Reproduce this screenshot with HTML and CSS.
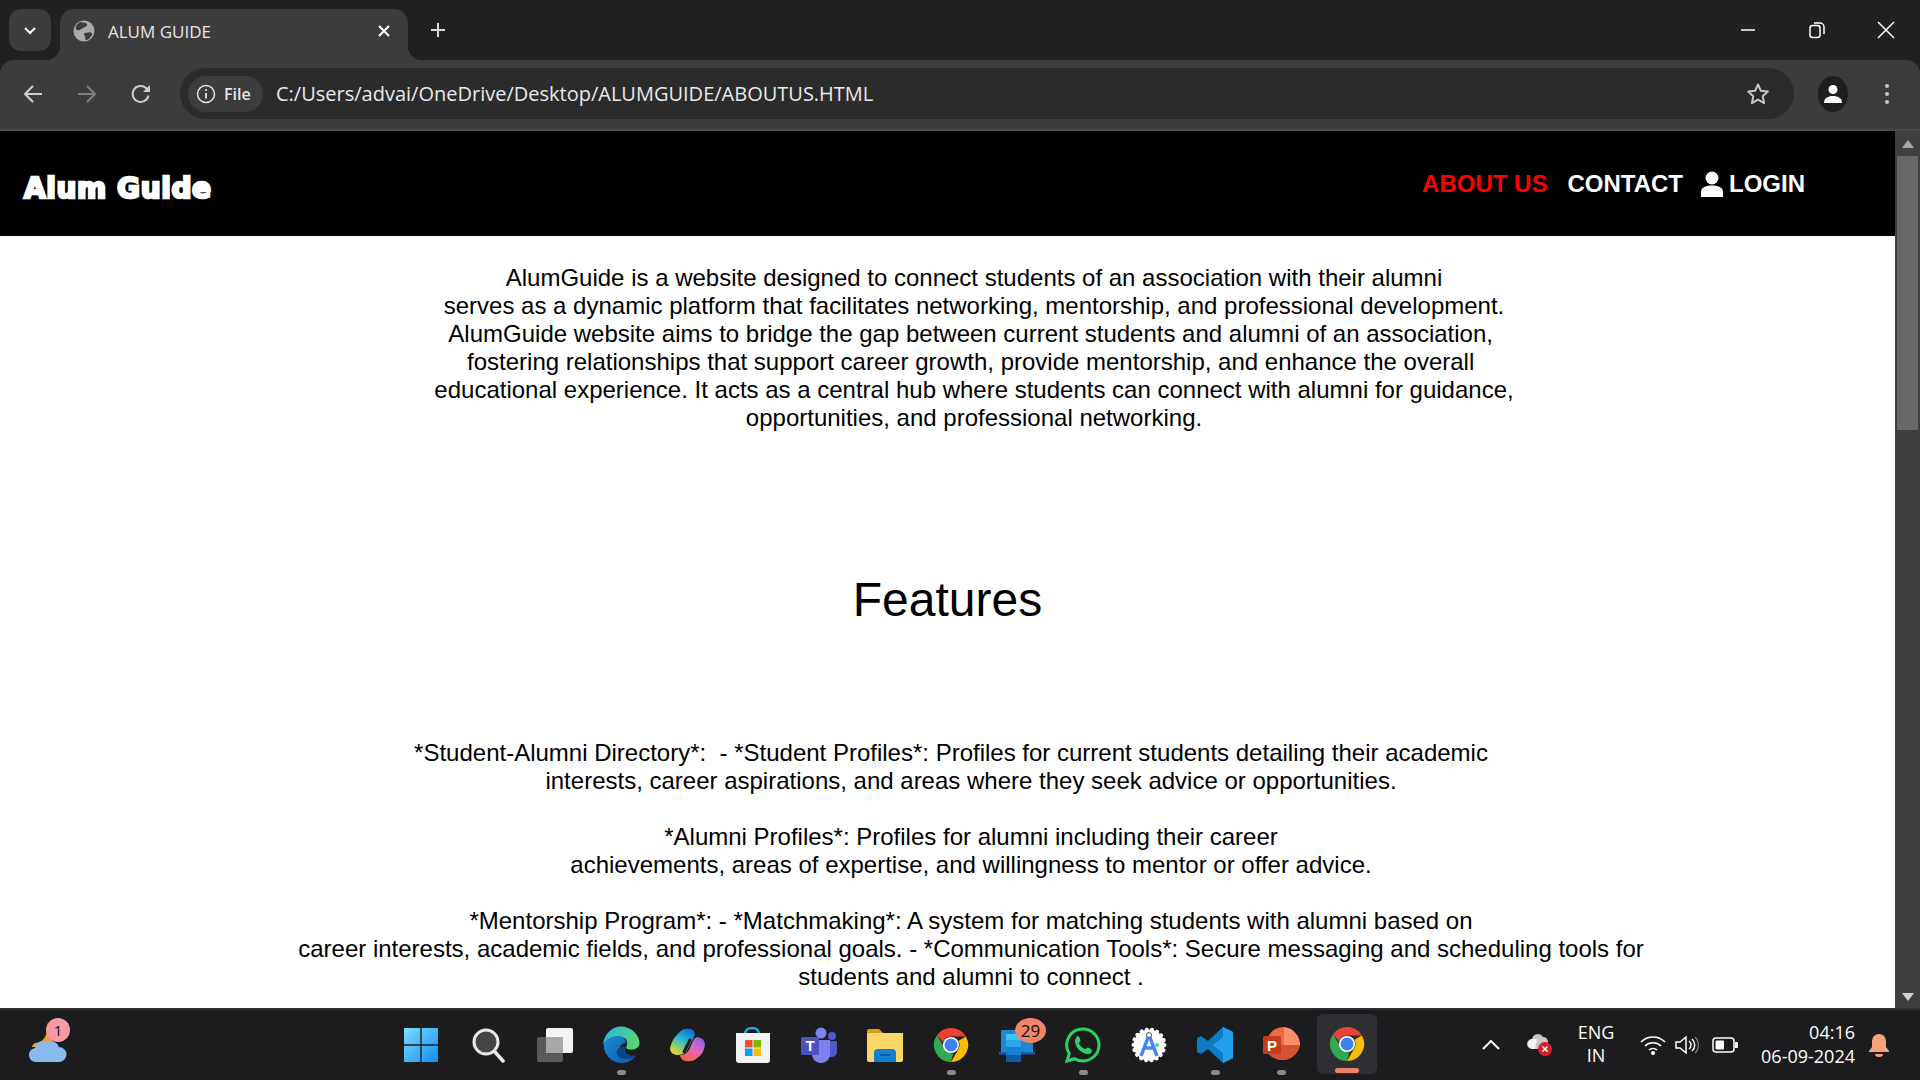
FILE: index.html
```html
<!DOCTYPE html>
<html lang="en">
<head>
    <meta charset="UTF-8">
    <title>ALUM GUIDE</title>
    <link rel="stylesheet" href="styles.css">
</head>
<body>
    <svg class="defs" width="0" height="0">
        <defs>
            <symbol id="chrome" viewBox="0 0 40 40">
                <path fill="#ea4335" d="M20 1a19 19 0 0 1 16.5 9.5H20a9.5 9.5 0 0 0-9 6.5L4.600 9A19 19 0 0 1 20 1z"/>
                <path fill="#fbbc04" d="M36.500 10.500A19 19 0 0 1 20 39l8.200-14.200A9.500 9.500 0 0 0 28.200 15.200z"/>
                <path fill="#34a853" d="M20 39A19 19 0 0 1 4.600 9l8 14a9.500 9.500 0 0 0 10 6.300z"/>
                <circle cx="20" cy="20" r="9" fill="#fff"/>
                <circle cx="20" cy="20" r="7.200" fill="#3f82ef"/>
            </symbol>
        </defs>
    </svg>

    <!-- barra de abas -->
    <div class="tabstrip">
        <div class="tab-search">
            <svg width="14" height="14" viewBox="0 0 14 14"><path d="M2 5l5 5 5-5" fill="none" stroke="#fff" stroke-width="2"/></svg>
        </div>
        <div class="tab">
            <svg class="favicon" width="22" height="22" viewBox="0 0 22 22">
                <circle cx="11" cy="11" r="10.500" fill="#a9adb1"/>
                <path d="M7 2c3 1 6 0 7 2s-2 3-4 4-4 3-6 2-2-5 3-8zM12 13c3-1 6-1 7 0s-2 6-5 7-1-3-2-4-2-2 0-3z" fill="#3c3c3c"/>
            </svg>
            <span class="tab-title">ALUM GUIDE</span>
            <svg class="tab-close" width="14" height="14" viewBox="0 0 14 14"><path d="M2 2l10 10M12 2L2 12" stroke="#fff" stroke-width="2"/></svg>
        </div>
        <svg class="new-tab" width="18" height="18" viewBox="0 0 18 18"><path d="M9 2v14M2 9h14" stroke="#d8d8d8" stroke-width="2"/></svg>
        <div class="window-controls">
            <svg width="18" height="18" viewBox="0 0 18 18"><path d="M2 9h14" stroke="#fff" stroke-width="1.500"/></svg>
            <svg width="18" height="18" viewBox="0 0 18 18"><rect x="2" y="4.500" width="10" height="12" rx="2.500" fill="none" stroke="#fff" stroke-width="1.500"/><path d="M6 2h6a4 4 0 0 1 4 4v7" fill="none" stroke="#fff" stroke-width="1.500"/></svg>
            <svg width="18" height="18" viewBox="0 0 18 18"><path d="M1 1l16 16M17 1L1 17" stroke="#fff" stroke-width="1.500"/></svg>
        </div>
    </div>

    <!-- barra de endereco -->
    <div class="toolbar">
        <div class="tool-btn"><svg width="22" height="22" viewBox="0 0 22 22"><path d="M20 11H3M11 3l-8 8 8 8" fill="none" stroke="#cfcfcf" stroke-width="2"/></svg></div>
        <div class="tool-btn"><svg width="22" height="22" viewBox="0 0 22 22"><path d="M2 11h17M11 3l8 8-8 8" fill="none" stroke="#7d7d7d" stroke-width="2"/></svg></div>
        <div class="tool-btn"><svg width="22" height="22" viewBox="0 0 22 22"><path d="M18.500 12.500A8 8 0 1 1 16 5l3 3" fill="none" stroke="#cfcfcf" stroke-width="2"/><path d="M20 2v7h-7z" fill="#cfcfcf"/></svg></div>
        <div class="omnibox">
            <div class="chip">
                <svg width="20" height="20" viewBox="0 0 20 20"><circle cx="10" cy="10" r="8.500" fill="none" stroke="#e6e6e6" stroke-width="1.500"/><path d="M10 9v5.500" stroke="#e6e6e6" stroke-width="1.800"/><circle cx="10" cy="6" r="1.100" fill="#e6e6e6"/></svg>
                <span>File</span>
            </div>
            <span class="url">C:/Users/advai/OneDrive/Desktop/ALUMGUIDE/ABOUTUS.HTML</span>
            <svg class="star" width="24" height="24" viewBox="0 0 24 24"><path d="M12 2.500l2.900 6.300 6.900.8-5.100 4.700 1.400 6.800-6.100-3.400-6.100 3.400 1.400-6.800-5.100-4.700 6.900-.8z" fill="none" stroke="#c8c8c8" stroke-width="2" stroke-linejoin="round"/></svg>
        </div>
        <div class="avatar">
            <svg width="22" height="22" viewBox="0 0 22 22"><circle cx="11" cy="6.500" r="4.500" fill="#fff"/><path d="M2 20c0-5 4-7 9-7s9 2 9 7z" fill="#fff"/></svg>
        </div>
        <div class="menu-dots"><i></i><i></i><i></i></div>
    </div>

    <!-- janela da pagina -->
    <div class="viewport">
        <div class="page">
            <nav class="navbar">
                <span class="logo">Alum Guide</span>
                <div class="nav-links">
                    <a class="active">ABOUT US</a>
                    <a>CONTACT</a>
                    <a class="login">
                        <svg width="22" height="26" viewBox="0 0 22 26"><circle cx="11" cy="7" r="6.500" fill="#fff"/><path d="M0 26v-5c0-4 4-6.500 11-6.500s11 2.500 11 6.500v5z" fill="#fff"/></svg>
                        LOGIN
                    </a>
                </div>
            </nav>
            <p class="intro">
                AlumGuide is a website designed to connect students of an association with their alumni<br>
                serves as a dynamic platform that facilitates networking, mentorship, and professional development.<br>
                AlumGuide website aims to bridge the gap between current students and alumni of an association,&nbsp;<br>
                fostering relationships that support career growth, provide mentorship, and enhance the overall&nbsp;<br>
                educational experience. It acts as a central hub where students can connect with alumni for guidance,<br>
                opportunities, and professional networking.
            </p>
            <h1 class="features-title">Features</h1>
            <p class="features">
                *Student-Alumni Directory*:&nbsp; - *Student Profiles*: Profiles for current students detailing their academic&nbsp;&nbsp;&nbsp;&nbsp;&nbsp;&nbsp;<br>
                interests, career aspirations, and areas where they seek advice or opportunities.<br>
                <br>
                *Alumni Profiles*: Profiles for alumni including their career<br>
                achievements, areas of expertise, and willingness to mentor or offer advice.<br>
                <br>
                *Mentorship Program*: - *Matchmaking*: A system for matching students with alumni based on<br>
                career interests, academic fields, and professional goals. - *Communication Tools*: Secure messaging and scheduling tools for<br>
                students and alumni to connect .
            </p>
        </div>
        <div class="scrollbar">
            <svg width="14" height="8" viewBox="0 0 14 8"><path d="M7 0l6 8H1z" fill="#a8a8a8"/></svg>
            <div class="thumb"></div>
            <svg class="arrow-down" width="14" height="8" viewBox="0 0 14 8"><path d="M7 8l6-8H1z" fill="#d0d0d0"/></svg>
        </div>
    </div>

    <!-- barra de tarefas -->
    <div class="taskbar">
        <div class="widget">
            <svg width="38" height="36" viewBox="0 0 38 36">
                <path d="M6 16c5 0 11-4 12-12 6 4 7 12 3 16H3c0-1 1-3 3-4z" fill="#f0a030"/>
                <path d="M8 35a7 7 0 0 1-2-14 9 9 0 0 1 13-6 8 8 0 0 1 11 5 7.500 7.500 0 0 1 0 15z" fill="#8ab8f0"/>
            </svg>
            <span class="badge badge-weather">1</span>
        </div>
        <div class="dock">
            <div class="dock-item first">
                <svg width="36" height="36" viewBox="0 0 36 36">
                    <defs><linearGradient id="win" x1="0" y1="0" x2="1" y2="1"><stop offset="0" stop-color="#7fdcff"/><stop offset="1" stop-color="#0f8ff0"/></linearGradient></defs>
                    <path fill="url(#win)" d="M1 1h16.300v16.300H1zM18.700 1H35v16.300H18.700zM1 18.700h16.300V35H1zM18.700 18.700H35V35H18.700z"/>
                </svg>
            </div>
            <div class="dock-item">
                <svg width="36" height="36" viewBox="0 0 36 36"><circle cx="15" cy="15" r="12" fill="#444" stroke="#e8e8e8" stroke-width="3"/><path d="M24 25l8 9" stroke="#e8e8e8" stroke-width="3.500" stroke-linecap="round"/></svg>
            </div>
            <div class="dock-item">
                <svg width="38" height="36" viewBox="0 0 38 36"><rect x="1" y="10" width="26" height="25" rx="2" fill="#5a5a5a"/><rect x="10" y="1" width="27" height="25" rx="2" fill="#f4f4f4"/><rect x="10" y="10" width="17" height="16" fill="#a8a8a8"/></svg>
            </div>
            <div class="dock-item running">
                <svg width="38" height="38" viewBox="0 0 38 38">
                    <defs>
                        <linearGradient id="edgeA" x1="0" y1=".2" x2="1" y2=".7"><stop offset="0" stop-color="#2fb4e0"/><stop offset="1" stop-color="#5ad86a"/></linearGradient>
                        <linearGradient id="edgeB" x1="0" y1="0" x2="1" y2="1"><stop offset="0" stop-color="#1c94dc"/><stop offset="1" stop-color="#0e56a4"/></linearGradient>
                    </defs>
                    <path d="M19 1A18 18 0 1 0 34 30C28 31 20 30 18 24C17 20 20 17 24 17z" fill="url(#edgeB)"/>
                    <path d="M1 19C2 8 10 .5 19 .5c10 0 18.500 8 18.500 17 0 4-4 6-9 6-3 0-5-1-4-3 2-4 0-9-5-10C13 9 4 12 1 19z" fill="url(#edgeA)"/>
                    <path d="M24 21C19 19 13 23 15 29 18 34 28 34 34 30 28 30 21 27 24 21z" fill="#0a4488"/>
                </svg>
            </div>
            <div class="dock-item">
                <svg width="37" height="34" viewBox="0 0 37 34">
                    <defs>
                        <linearGradient id="copA" x1=".7" y1="0" x2=".2" y2="1"><stop offset="0" stop-color="#1070e0"/><stop offset=".45" stop-color="#30c0c0"/><stop offset="1" stop-color="#f8d820"/></linearGradient>
                        <linearGradient id="copB" x1=".8" y1="0" x2=".2" y2="1"><stop offset="0" stop-color="#8a60f0"/><stop offset=".5" stop-color="#e868b8"/><stop offset="1" stop-color="#f8603c"/></linearGradient>
                    </defs>
                    <path d="M12 3Q14 0 22 1 27 2 25 9L17 24Q14 27 8 27 1 26 1 20 3 12 7 8 10 4 12 3z" fill="url(#copA)"/>
                    <path d="M28 9Q36 10 36 17 35 26 27 31 23 34 16 33 11 31 11 27 17 27 20 22L25 11z" fill="url(#copB)"/>
                    <path d="M21 12L15 24" stroke="#1c1c1e" stroke-width="3" stroke-linecap="round"/>
                </svg>
            </div>
            <div class="dock-item">
                <svg width="36" height="38" viewBox="0 0 36 38">
                    <path d="M10 8c0-8 14-8 14 0" fill="none" stroke="#1ca8e0" stroke-width="2.500"/>
                    <path d="M1 7h34v27a3 3 0 0 1-3 3H4a3 3 0 0 1-3-3z" fill="#f2f2f2"/>
                    <rect x="10" y="14" width="7.500" height="7.500" fill="#f25022"/><rect x="18.500" y="14" width="7.500" height="7.500" fill="#7fba00"/>
                    <rect x="10" y="22.500" width="7.500" height="7.500" fill="#00a4ef"/><rect x="18.500" y="22.500" width="7.500" height="7.500" fill="#ffb900"/>
                </svg>
            </div>
            <div class="dock-item">
                <svg width="38" height="36" viewBox="0 0 38 36">
                    <circle cx="21" cy="6" r="5.500" fill="#7b83eb"/><circle cx="32" cy="9" r="4" fill="#5059c9"/>
                    <path d="M27 14h10v11c0 3-3 5-6 5h-4z" fill="#5059c9"/>
                    <path d="M12 13h18v14c0 5-4 9-9 9s-9-4-9-9z" fill="#7b83eb"/>
                    <rect x="1" y="10" width="18" height="18" rx="1.500" fill="#4b53bc"/>
                    <text class="teams-t" x="10" y="24">T</text>
                </svg>
            </div>
            <div class="dock-item">
                <svg width="38" height="34" viewBox="0 0 38 34">
                    <path d="M1 3a2 2 0 0 1 2-2h10l4 4h-16z" fill="#d8a010"/>
                    <path d="M1 5h36v27a2 2 0 0 1-2 2H3a2 2 0 0 1-2-2z" fill="#fcd766"/>
                    <path d="M8 34v-9a4 4 0 0 1 4-4h14a4 4 0 0 1 4 4v9z" fill="#1080d0"/>
                    <path d="M14 27h10" stroke="#0a5a9c" stroke-width="2"/>
                </svg>
            </div>
            <div class="dock-item running"><svg width="36" height="36"><use href="#chrome"/></svg></div>
            <div class="dock-item">
                <svg width="36" height="33" viewBox="0 0 36 33">
                    <rect x="2" y="1" width="32" height="24" rx="1" fill="#1f86d8"/>
                    <rect x="0" y="23" width="36" height="2.500" fill="#155fa8"/>
                    <rect x="7" y="5" width="15" height="6" fill="#3cc4f4"/>
                    <rect x="7" y="11" width="15" height="7" fill="#2aa4ea"/>
                    <rect x="7" y="18" width="15" height="8" fill="#1a80d0"/>
                    <rect x="7" y="26" width="15" height="7" fill="#0c5ca8"/>
                </svg>
                <span class="badge badge-mail">29</span>
            </div>
            <div class="dock-item running">
                <svg width="36" height="36" viewBox="0 0 36 36">
                    <path d="M18 2a16 16 0 0 1 0 32c-3 0-6-.8-8.500-2.300L2 34l2.300-7.300A16 16 0 0 1 18 2z" fill="none" stroke="#25d366" stroke-width="3"/>
                    <path d="M12 9c2-1 3 3 3.500 4.500 0 1-2 2-1.500 3 1 2.500 3 4.500 6 5.500 1 .3 2-2 3-1.500 1.500.5 4 2 4 3 0 3-3 4-5 3.500-6-1-11-6-12-12-.3-2 1-5 2.500-5.500z" fill="#25d366"/>
                </svg>
            </div>
            <div class="dock-item">
                <svg width="36" height="38" viewBox="0 0 36 38">
                    <circle class="scallop" cx="18" cy="19" r="15.500"/>
                    <path d="M18 9L10 30M18 9l8 21M13 22h10" fill="none" stroke="#4285f4" stroke-width="3.500"/>
                    <circle cx="18" cy="9" r="2.500" fill="#fff" stroke="#555" stroke-width="1"/>
                    <circle cx="26" cy="19" r="2" fill="#3ddc84"/>
                </svg>
            </div>
            <div class="dock-item running">
                <svg width="38" height="38" viewBox="0 0 38 38">
                    <path d="M27 1l10 5v26l-10 5-15-14-7 5-4-2V12l4-2 7 5z" fill="#0e7cc4"/>
                    <path d="M27 1l10 5v26l-10 5V27l-10-8 10-8z" fill="#22a0ee"/>
                </svg>
            </div>
            <div class="dock-item running">
                <svg width="38" height="36" viewBox="0 0 38 36">
                    <path d="M22 0a18 18 0 0 1 16 18H22z" fill="#ff8f6b"/>
                    <path d="M22 0v18h16A18 18 0 0 1 6 26V10A18 18 0 0 1 22 0z" fill="#ed6c47"/>
                    <path d="M6 18h32a18 18 0 0 1-32 8z" fill="#d35230"/>
                    <rect x="1" y="9" width="18" height="18" rx="1.500" fill="#c43e1c"/>
                    <text class="ppt-p" x="10" y="24">P</text>
                </svg>
            </div>
            <div class="dock-item current"><svg width="36" height="36"><use href="#chrome"/></svg></div>
        </div>
        <div class="tray">
            <svg class="tray-chevron" width="18" height="10" viewBox="0 0 18 10"><path d="M1 9l8-8 8 8" fill="none" stroke="#fff" stroke-width="2"/></svg>
            <svg class="tray-cloud" width="26" height="24" viewBox="0 0 26 24">
                <path d="M5 16a5 5 0 0 1 0-10 6 6 0 0 1 11-2 5 5 0 0 1 3 9l-3 3z" fill="#c8c8c8"/>
                <path d="M1 11a5 5 0 0 1 5-5h4l-2 10H5a5 5 0 0 1-4-5z" fill="#f4f4f4"/>
                <circle cx="18" cy="16" r="7" fill="#d8202c"/><path d="M15.500 13.500l5 5M20.500 13.500l-5 5" stroke="#fff" stroke-width="1.500"/>
            </svg>
            <div class="tray-lang"><span>ENG</span><span>IN</span></div>
            <svg class="tray-wifi" width="26" height="20" viewBox="0 0 26 20" fill="none" stroke="#fff" stroke-width="1.600">
                <path d="M1 7a17 17 0 0 1 24 0M5 11a11.500 11.500 0 0 1 16 0M9 15a6 6 0 0 1 8 0"/><circle cx="13" cy="18" r="1.200" fill="#fff"/>
            </svg>
            <svg class="tray-sound" width="24" height="20" viewBox="0 0 24 20" fill="none" stroke="#fff" stroke-width="1.500">
                <path d="M1 7h4l6-5v16l-6-5H1z"/><path d="M14 6a5 5 0 0 1 0 8M17 4a8 8 0 0 1 0 12"/><path d="M20 2a11 11 0 0 1 0 16" stroke="#777"/>
            </svg>
            <svg class="tray-battery" width="26" height="16" viewBox="0 0 26 16">
                <rect x="1" y="1" width="21" height="14" rx="3" fill="none" stroke="#fff" stroke-width="1.500"/><rect x="3.500" y="3.500" width="8.500" height="9" rx="1" fill="#fff"/><path d="M23 5h2a1 1 0 0 1 1 1v4a1 1 0 0 1-1 1h-2z" fill="#fff"/>
            </svg>
            <div class="tray-clock"><span>04:16</span><span>06-09-2024</span></div>
            <svg class="tray-bell" width="22" height="24" viewBox="0 0 22 24">
                <path d="M11 1a7 7 0 0 1 7 7v6l3 4v1H1v-1l3-4V8a7 7 0 0 1 7-7z" fill="#f8a27c"/><path d="M7 21h8a4 3 0 0 1-8 0z" fill="#f8a27c"/>
            </svg>
        </div>
    </div>
</body>
</html>
```

FILE: styles.css
```css
* {
    box-sizing: border-box;
}
html, body {
    margin: 0;
    height: 100%;
}
body {
    width: 1920px;
    height: 1080px;
    overflow: hidden;
    display: flex;
    flex-direction: column;
    font-family: 'Liberation Sans', Arial, sans-serif;
    background-color: #202222;
}
.defs {
    position: absolute;
}

/* abas */
.tabstrip {
    height: 60px;
    flex: none;
    display: flex;
    align-items: flex-end;
    padding-left: 9px;
    background-color: #202222;
    color: #fff;
}
.tab-search {
    width: 42px;
    height: 42px;
    margin-bottom: 9px;
    border-radius: 12px;
    background-color: #3c3c3c;
    display: flex;
    align-items: center;
    justify-content: center;
}
.tab {
    position: relative;
    width: 348px;
    height: 51px;
    margin-left: 9px;
    padding: 0 17px 7px 13px;
    border-radius: 14px 14px 0 0;
    background-color: #3c3c3c;
    display: flex;
    align-items: center;
}
.tab::before, .tab::after {
    content: "";
    position: absolute;
    bottom: 0;
    width: 14px;
    height: 14px;
}
.tab::before {
    left: -14px;
    background: radial-gradient(circle at 0 0, transparent 14px, #3c3c3c 14.5px);
}
.tab::after {
    right: -14px;
    background: radial-gradient(circle at 100% 0, transparent 14px, #3c3c3c 14.5px);
}
.tab-title {
    flex: 1;
    margin-left: 13px;
    font-family: 'Open Sans', sans-serif;
    font-size: 17px;
    color: #e6e6e6;
}
.new-tab {
    margin: 0 0 21px 21px;
}
.window-controls {
    margin-left: auto;
    margin-right: 25px;
    width: 156px;
    height: 18px;
    margin-bottom: 21px;
    display: flex;
    justify-content: space-between;
}

/* barra de endereco */
.toolbar {
    height: 71px;
    flex: none;
    display: flex;
    align-items: center;
    padding: 0 0 2px 15px;
    border-bottom: 2px solid #4a4a4a;
    border-radius: 14px 14px 0 0;
    background-color: #3c3c3c;
}
.tool-btn {
    width: 36px;
    height: 36px;
    margin-right: 18px;
    display: flex;
    align-items: center;
    justify-content: center;
}
.omnibox {
    width: 1614px;
    height: 51px;
    margin-left: 3px;
    padding: 0 24px 0 8px;
    border-radius: 26px;
    background-color: #2b2b2b;
    display: flex;
    align-items: center;
}
.chip {
    width: 75px;
    height: 36px;
    padding-left: 8px;
    border-radius: 18px;
    background-color: #3c3c3c;
    display: flex;
    align-items: center;
    gap: 8px;
    font-family: 'Open Sans', sans-serif;
    font-size: 16px;
    font-weight: 600;
    color: #e8e8e8;
}
.url {
    flex: 1;
    margin-left: 13px;
    font-family: 'Open Sans', sans-serif;
    font-size: 20px;
    color: #e8eaed;
}
.avatar {
    width: 30px;
    height: 36px;
    margin-left: 24px;
    border-radius: 50%;
    background-color: #1f1f1f;
    display: flex;
    align-items: center;
    justify-content: center;
}
.menu-dots {
    margin-left: 37px;
    display: flex;
    flex-direction: column;
    gap: 4px;
}
.menu-dots i {
    width: 4px;
    height: 4px;
    border-radius: 50%;
    background-color: #c8c8c8;
}

/* pagina */
.viewport {
    flex: 1;
    min-height: 0;
    display: flex;
}
.page {
    flex: 1;
    min-width: 0;
    overflow: hidden;
    background-color: #fff;
    color: #000;
}
.navbar {
    height: 105px;
    padding: 0 90px 0 24px;
    background-color: #000;
    display: flex;
    align-items: center;
    justify-content: space-between;
}
.logo {
    margin-top: 9px;
    font-family: 'DejaVu Sans', sans-serif;
    font-size: 28px;
    font-weight: bold;
    letter-spacing: .6px;
    color: #fff;
    -webkit-text-stroke: 2.500px #fff;
}
.nav-links {
    display: flex;
    align-items: center;
    gap: 18px;
    font-size: 24px;
    font-weight: bold;
    color: #fff;
}
.nav-links .active {
    margin-right: 2px;
    color: #ff0000;
}
.login {
    display: flex;
    align-items: center;
    gap: 6px;
}
.intro, .features {
    margin: 0;
    font-size: 24px;
    line-height: 28px;
    text-align: center;
    white-space: nowrap;
}
.intro {
    padding: 28px 0 0 53px;
}
.features-title {
    margin: 140px 0 111px;
    font-size: 48px;
    line-height: 56px;
    font-weight: normal;
    text-align: center;
}
.features {
    padding-left: 47px;
}
.scrollbar {
    position: relative;
    width: 25px;
    flex: none;
    padding-top: 9px;
    background-color: #3f3f3f;
    display: flex;
    flex-direction: column;
    align-items: center;
}
.thumb {
    width: 21px;
    height: 274px;
    margin-top: 8px;
    background-color: #686868;
}
.arrow-down {
    margin-top: auto;
    margin-bottom: 7px;
}

/* barra de tarefas */
.taskbar {
    height: 72px;
    flex: none;
    border-top: 2px solid #2e2e2e;
    background-color: #1c1c1e;
    display: flex;
    align-items: center;
}
.widget {
    position: relative;
    width: 388px;
    height: 100%;
    padding: 17px 0 0 29px;
}
.badge {
    position: absolute;
    display: flex;
    align-items: center;
    justify-content: center;
    font-family: 'Open Sans', sans-serif;
    color: #111;
    border-radius: 50%;
}
.badge-weather {
    left: 46px;
    top: 8px;
    width: 24px;
    height: 24px;
    font-size: 15px;
    background-color: #f79aa6;
}
.badge-mail {
    top: 8px;
    left: 31px;
    width: 31px;
    height: 25px;
    font-size: 17px;
    background-color: #f08468;
}
.scallop {
    fill: #fff;
    stroke: #fff;
    stroke-width: 4;
    stroke-linecap: round;
    stroke-dasharray: .1 5.3;
}
.dock {
    display: flex;
    height: 100%;
}
.dock-item {
    position: relative;
    width: 66px;
    height: 100%;
    display: flex;
    align-items: center;
    justify-content: center;
}
.dock-item.first {
    width: 68px;
    padding-right: 2px;
}
.dock-item.running::after {
    content: "";
    position: absolute;
    left: 29px;
    bottom: 5px;
    width: 9px;
    height: 5px;
    border-radius: 3px;
    background-color: #8a8a8a;
}
.dock-item.current {
    width: 60px;
    height: 60px;
    margin: 4px 0 0 3px;
    border-radius: 6px;
    background-color: #2f2f33;
}
.dock-item.current::after {
    content: "";
    position: absolute;
    left: 18px;
    bottom: 1px;
    width: 24px;
    height: 5px;
    border-radius: 3px;
    background-color: #f0806a;
}
.teams-t, .ppt-p {
    font-family: 'Liberation Sans', sans-serif;
    font-size: 15px;
    font-weight: bold;
    fill: #fff;
    text-anchor: middle;
}
.tray {
    flex: 1;
    height: 100%;
    padding-right: 30px;
    display: flex;
    align-items: center;
    justify-content: flex-end;
    color: #fff;
    font-family: 'Open Sans', sans-serif;
    font-size: 18px;
}
.tray-cloud {
    margin-left: 27px;
}
.tray-lang {
    width: 38px;
    margin-left: 24px;
    display: flex;
    flex-direction: column;
    align-items: center;
    line-height: 23px;
    margin-top: -2px;
}
.tray-wifi {
    margin-left: 25px;
}
.tray-sound {
    margin-left: 9px;
}
.tray-battery {
    margin-left: 13px;
}
.tray-clock {
    margin-left: 23px;
    margin-top: -2px;
    display: flex;
    flex-direction: column;
    align-items: flex-end;
    line-height: 24px;
}
.tray-bell {
    margin-left: 13px;
}
```
